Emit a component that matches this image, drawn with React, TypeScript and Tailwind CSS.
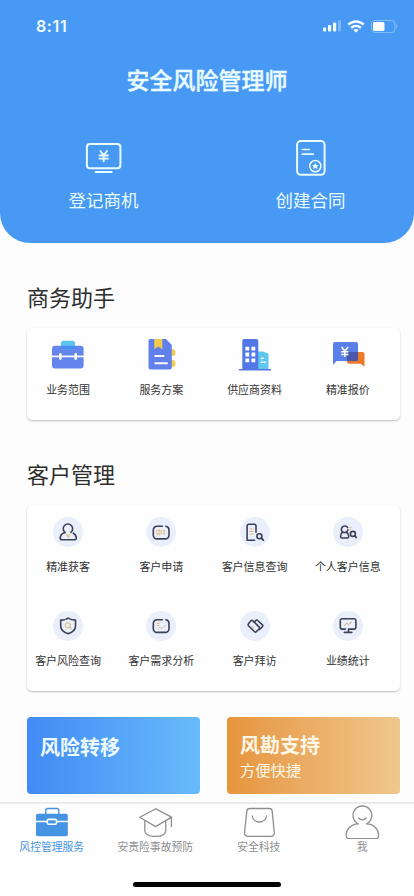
import type { ReactNode } from "react";
import { clsx } from "clsx";

interface Item {
  label: string;
  icon: ReactNode;
}

const NAVY = "#3d4157";
const GOLD = "#e3bc88";

function Art({ children }: { children: ReactNode }) {
  return (
    <svg width="40" height="40" viewBox="0 0 40 40" fill="none" className="block shrink-0">
      {children}
    </svg>
  );
}

function Round({ children }: { children: ReactNode }) {
  return (
    <span className="block h-[30px] w-[30px] shrink-0 rounded-full bg-[#e9effb]">
      <svg width="30" height="30" viewBox="0 0 30 30" fill="none" stroke={NAVY} strokeWidth="1.6" strokeLinecap="round" strokeLinejoin="round">
        {children}
      </svg>
    </span>
  );
}

const business: Item[] = [
  {
    label: "业务范围",
    icon: (
      <Art>
        <rect x="4" y="11.7" width="31.6" height="22.8" rx="3" fill="#6385ec" />
        <path d="M13 14.8V9a2.3 2.3 0 0 1 2.3-2.3h9.4A2.3 2.3 0 0 1 27 9v5.8a3 3 0 0 1-2 .7H15a3 3 0 0 1-2-.7Z" fill="#5cc4ee" />
        <path d="M13 11.7h14v3.1a3 3 0 0 1-2 .7H15a3 3 0 0 1-2-.7Z" fill="#4a8df0" />
        <path d="M4 22.4h32" stroke="#fff" strokeWidth="1.7" />
        <path d="M12.4 20.4v4.2M27.7 20.4v4.2" stroke="#fff" strokeWidth="2.6" strokeLinecap="round" />
      </Art>
    ),
  },
  {
    label: "服务方案",
    icon: (
      <Art>
        <rect x="25" y="15.2" width="9.4" height="6.8" rx="2.5" fill="#f0cb55" />
        <rect x="25" y="26" width="9.4" height="6.8" rx="2.5" fill="#f0cb55" />
        <path d="M9.5 5H25l5.8 6v22.5a2 2 0 0 1-2 2H9.5a2 2 0 0 1-2-2V7a2 2 0 0 1 2-2Z" fill="#6081eb" />
        <path d="M13.3 5h8v10.2l-4-2.8-4 2.8Z" fill="#f2ca4c" />
        <path d="M14.3 22h8.2M14.3 29.3H26" stroke="#fff" strokeWidth="2" strokeLinecap="round" />
      </Art>
    ),
  },
  {
    label: "供应商资料",
    icon: (
      <Art>
        <path d="M22 17.5h6l5.5 2.2V36H22Z" fill="#61c8ed" />
        <path d="M25.7 24.2h3.2M25.7 28.3h5.2" stroke="#e6f8ff" strokeWidth="1.6" />
        <path d="M9.3 5h12a2 2 0 0 1 2 2v29h-16V7a2 2 0 0 1 2-2Z" fill="#5278e8" />
        <path d="M4.5 35.7h31" stroke="#5578df" strokeWidth="1.6" strokeLinecap="round" />
        <path d="M12.3 12.7v21.5M18.4 12.7v21.5" stroke="#fff" strokeWidth="3.8" strokeDasharray="3.8 2.1 3.8 2.1 3.8 20" />
      </Art>
    ),
  },
  {
    label: "精准报价",
    icon: (
      <Art>
        <path d="M21 18h13.5a2 2 0 0 1 2 2v12.8l-4-3.1H21a2 2 0 0 1-2-2V20a2 2 0 0 1 2-2Z" fill="#ed792b" />
        <path d="M7 8h21a2 2 0 0 1 2 2v15a2 2 0 0 1-2 2H8.5L5 31V10a2 2 0 0 1 2-2Z" fill="#5b7fe9" />
        <path d="M21 18h9v7a2 2 0 0 1-2 2h-9v-7a2 2 0 0 1 2-2Z" fill="#4c57a9" />
        <path d="m13.5 13 3.3 4 3.3-4M13.2 17.7h7.2M13.2 20.5h7.2M16.8 17v6" stroke="#fff" strokeWidth="1.5" />
      </Art>
    ),
  },
];

const customers: Item[] = [
  {
    label: "精准获客",
    icon: (
      <Round>
        <path d="M12 15.4a4.7 4.7 0 1 1 6-.1M12 15.4c-2.9.9-4.7 3-4.8 5.5 0 1.2.6 1.9 1.7 1.9h12.7c1.2 0 1.8-.8 1.7-1.9-.2-2.2-1.2-3.8-3-4.7" />
        <path d="m13.4 16.6 1.9 2.2 1.9-2.2M13.7 19h3.2M15.3 18.8v2" stroke={GOLD} strokeWidth="1" />
      </Round>
    ),
  },
  {
    label: "客户申请",
    icon: (
      <Round>
        <path d="M16.4 9.2H11A3.7 3.7 0 0 0 7.3 13v5.3a3.7 3.7 0 0 0 3.7 3.6h8.3a3.7 3.7 0 0 0 3.7-3.6V13a3.7 3.7 0 0 0-3.1-3.7" />
        <path d="M11.2 13.4h4v3.4h-4ZM13.2 12.4v5.8M11.2 18l1-.8M16.8 14h2M17.2 16.6h1.4M18.1 13v4.6" stroke={GOLD} strokeWidth=".9" />
      </Round>
    ),
  },
  {
    label: "客户信息查询",
    icon: (
      <Round>
        <path d="M16 15.3V9a1.8 1.8 0 0 0-1.8-1.8H8.9A1.8 1.8 0 0 0 7.1 9v14.2h7.5" />
        <path d="M10 11.8h3M10 14.4h3M10 17h3" stroke={GOLD} strokeWidth="1.1" />
        <circle cx="19.4" cy="19.2" r="2.5" />
        <path d="m21.4 21.1 1.9 2" strokeWidth="1.8" />
      </Round>
    ),
  },
  {
    label: "个人客户信息",
    icon: (
      <Round>
        <path d="M9.6 15a3.4 3.4 0 1 1 5-4.5M9.6 15c-1.3.8-2 2.1-2 4.4 0 1 .5 1.6 1.4 1.6h5.3c1 0 1.5-.6 1.4-1.6-.1-2.1-.8-3.5-2.2-4.4M14.8 12.9c-.2 1-.7 1.7-1.3 2.1-1.2.7-2.6.7-3.9 0" />
        <path d="M16.3 10.8h2M16.3 13h1.2" stroke={GOLD} strokeWidth="1" />
        <circle cx="19.9" cy="16.9" r="2.5" />
        <path d="m21.9 18.9 1.3 1.6" strokeWidth="1.8" />
      </Round>
    ),
  },
  {
    label: "客户风险查询",
    icon: (
      <Round>
        <path d="m13 8.2 2.1-1.1c2.3 1.5 4.6 2 7.4 2v6.2c0 3.4-2.5 5.8-7.4 7.4-4.9-1.6-7.4-4-7.4-7.4V9.1c1.4 0 2.6-.1 3.7-.4" />
        <circle cx="14.8" cy="14.3" r="2.5" stroke={GOLD} strokeWidth="1.1" />
        <path d="m16.7 16.2 1.5 1.5" stroke={GOLD} strokeWidth="1.1" />
      </Round>
    ),
  },
  {
    label: "客户需求分析",
    icon: (
      <Round>
        <path d="M16.4 8.7H11a3.7 3.7 0 0 0-3.7 3.8v5.3a3.7 3.7 0 0 0 3.7 3.6h8.3a3.7 3.7 0 0 0 3.7-3.6v-5.3a3.7 3.7 0 0 0-3.1-3.7" />
        <path d="M11 12.3h2.6M11 14.5h2.2M12.3 17.5c2-3 2.5 1.4 4.2-.7 1-1.3 1.8-.2 3-2.2" stroke={GOLD} strokeWidth="1" />
      </Round>
    ),
  },
  {
    label: "客户拜访",
    icon: (
      <Round>
        <path d="m12.8 9.7 6.5 6.4a1.2 1.2 0 0 1 0 1.7l-3 3a1.2 1.2 0 0 1-1.7 0l-6.1-6.1a1.4 1.4 0 0 1 0-2l2.4-2.9a1.4 1.4 0 0 1 1.9-.1Z" />
        <path d="m14.3 11.1 1.5-1.6a1.3 1.3 0 0 1 1.9 0l4.7 4.4a1.3 1.3 0 0 1 0 1.8l-2.8 2.8" />
        <path d="m11.7 15.4 2.5 2.5" stroke={GOLD} strokeWidth=".9" />
      </Round>
    ),
  },
  {
    label: "业绩统计",
    icon: (
      <Round>
        <path d="M12.5 18.1H9.1a1.8 1.8 0 0 1-1.8-1.8V9.5a1.8 1.8 0 0 1 1.8-1.8h12a1.8 1.8 0 0 1 1.8 1.8v6.8a1.8 1.8 0 0 1-1.8 1.8h-5.6v2.8M11.3 21.4h7.5" />
        <path d="m11.6 14.4 2.1-2.2 1.7 1.5 3-2.5" stroke="#e0a068" strokeWidth="1" />
      </Round>
    ),
  },
];

const tabs: Item[] = [
  {
    label: "风控管理服务",
    icon: (
      <>
        <path d="M13.8 10V6.5a2 2 0 0 1 2-2h9a2 2 0 0 1 2 2V10" strokeWidth="1.4" />
        <rect x="4" y="9.8" width="31.8" height="22.4" rx="1.8" fill="currentColor" stroke="none" />
        <path d="M4 17.5h10.5M25.5 17.5H36" stroke="#fff" strokeWidth="1.3" />
        <rect x="15.3" y="15.4" width="9.2" height="4.8" rx="1.4" stroke="#fff" strokeWidth="1.6" />
      </>
    ),
  },
  {
    label: "安责险事故预防",
    icon: (
      <path d="M4.8 13.3 20.8 4.8l15.8 8.3-16 9.5ZM9.8 17v9.5c0 3.2 3.5 5.8 8 5.8h5.4c4.5 0 7.6-2.6 7.6-5.8V17M36.4 13.3v9.2" />
    ),
  },
  {
    label: "安全科技",
    icon: (
      <>
        <path d="M10.8 4.5h19.4a3 3 0 0 1 3 2.7l2.1 21.5a3.3 3.3 0 0 1-3.3 3.6H8.8a3.3 3.3 0 0 1-3.3-3.6L7.8 7.2a3 3 0 0 1 3-2.7Z" />
        <path d="M13.2 12c.6 3.5 3.6 6 7.2 6s6.6-2.5 7.2-6" />
      </>
    ),
  },
  {
    label: "我",
    icon: (
      <path d="M16.2 19.8a9.4 9.4 0 1 1 8.4 0M16.2 19.9C8.8 20.3 4.2 25.2 4.2 31.5c0 2.2 1 3.2 3.2 3.2h26c2.200 0 3.200-1 3.200-3.200 0-6.300-4.600-11.200-12-11.600M16.800 14c1.800 2.400 5.600 2.400 7.400 0" />
    ),
  },
];

function StatusBar() {
  return (
    <div className="flex h-[52px] items-center justify-between pl-9 pr-4">
      <span className="font-['Inter'] text-[16px] font-semibold tracking-[0.6px] text-[#eefbff]">8:11</span>
      <div className="flex items-center gap-1.5">
        <svg width="18" height="12" viewBox="0 0 18 12" fill="#f3fcff">
          <rect x="0" y="7.5" width="3.2" height="4" rx="1" />
          <rect x="5" y="5" width="3.2" height="6.5" rx="1" />
          <rect x="10" y="2.5" width="3.2" height="9" rx="1" />
          <rect x="15" y="0" width="3" height="11.5" rx="1" opacity=".3" />
        </svg>
        <svg width="18" height="13" viewBox="0 0 18 13" fill="none" stroke="#f3fcff" strokeWidth="2.4">
          <path d="M1.3 4.7c4.4-4.3 11-4.3 15.4 0M4.2 7.8c2.900-2.600 6.700-2.600 9.600 0" />
          <path d="M6.3 9.9c1.600-1.300 3.800-1.300 5.400 0L9 12.600Z" fill="#f3fcff" stroke="none" />
        </svg>
        <svg width="27" height="13" viewBox="0 0 27 13" fill="none">
          <rect x=".5" y=".5" width="23.5" height="12" rx="3.5" stroke="#83bff8" />
          <rect x="2" y="2" width="11.5" height="9" rx="1.8" fill="#fff" />
          <path d="M25.3 4.5c1.500.7 1.500 3.300 0 4Z" fill="#83bff8" />
        </svg>
      </div>
    </div>
  );
}

function Cell({ item, className }: { item: Item; className?: string }) {
  return (
    <div className={clsx("flex flex-col items-center", className)}>
      {item.icon}
      <span className="whitespace-nowrap text-[11px] leading-4 text-[#333]">{item.label}</span>
    </div>
  );
}

export default function App() {
  return (
    <div className="flex h-[896px] w-[414px] flex-col overflow-hidden bg-[#fdfdfd] font-['Noto_Sans_CJK_SC',sans-serif]">
      <header className="h-[243px] shrink-0 rounded-b-[30px] bg-[#4899f4] text-[#e8fbff]">
        <StatusBar />
        <h1 className="mt-[11px] text-center text-[23px] font-medium leading-8 [-webkit-text-stroke:0.4px_#e8fbff]">安全风险管理师</h1>
        <div className="mt-[43px] grid grid-cols-2">
          <button className="flex flex-col items-center gap-[9px]">
            <Art>
              <g stroke="currentColor" strokeWidth="2" strokeLinecap="round">
                <rect x="2.9" y="5.9" width="33.5" height="24.3" rx="3" />
                <path d="M11.5 34h16.2" />
                <path d="m16.3 13 3.4 4.2 3.4-4.2M15.4 17.5h8.6M15.4 20.6h8.6M19.7 17.2v6" strokeWidth="1.9" />
              </g>
            </Art>
            <span className="text-[17.5px] leading-[26px]">登记商机</span>
          </button>
          <button className="flex flex-col items-center gap-[9px]">
            <Art>
              <g stroke="currentColor" strokeWidth="2" strokeLinecap="round">
                <rect x="6.1" y="3.1" width="27.5" height="33.7" rx="3.5" />
                <path d="M11.3 11.5h7M11.3 16.2h11" strokeWidth="1.7" />
                <circle cx="24.3" cy="28.1" r="5.6" strokeWidth="1.6" />
                <path d="m24.3 24.700 1.100 2.200 2.300.3-1.700 1.600.4 2.300-2.100-1.100-2.100 1.100.4-2.300-1.700-1.600 2.300-.3Z" fill="currentColor" stroke="none" />
              </g>
            </Art>
            <span className="text-[17.5px] leading-[26px]">创建合同</span>
          </button>
        </div>
      </header>

      <main className="flex-1 pl-[27px] pr-[14px]">
        <h2 className="mt-[37px] text-[22px] leading-8 text-[#2e2e2e]">商务助手</h2>
        <section className="mt-4 h-[92px] rounded-[5px] bg-[#fefefe] pt-[6px] shadow-[0_1px_2px_rgba(0,0,0,0.25)]">
          <div className="-ml-[5.5px] mr-[5.5px] grid grid-cols-4">
            {business.map((item) => <Cell key={item.label} item={item} className="gap-[7px]" />)}
          </div>
        </section>

        <h2 className="mt-[37px] text-[22px] leading-8 text-[#2e2e2e]">客户管理</h2>
        <section className="mt-4 h-[186px] rounded-[5px] bg-[#fefefe] pt-[12px] shadow-[0_1px_2px_rgba(0,0,0,0.25)]">
          <div className="-ml-[5.5px] mr-[5.5px] grid grid-cols-4 gap-y-[37px]">
            {customers.map((item) => <Cell key={item.label} item={item} className="gap-[11px]" />)}
          </div>
        </section>

        <div className="mt-[26px] grid grid-cols-2 gap-[27px]">
          <div className="h-[77px] rounded-[4px] bg-gradient-to-r from-[#428af5] to-[#68bbfa] px-[13px] pt-4 text-[#effcff]">
            <p className="text-[20px] font-bold leading-7">风险转移</p>
          </div>
          <div className="h-[77px] rounded-[4px] bg-gradient-to-r from-[#e6953c] to-[#efc78c] px-[13px] pt-[14px] text-[#fff7e6]">
            <p className="text-[20px] font-bold leading-7">风勘支持</p>
            <p className="-mt-px text-[15.3px] leading-[22px]">方便快捷</p>
          </div>
        </div>
      </main>

      <nav className="flex h-[94px] shrink-0 flex-col items-center border-t-2 border-[#ebebeb] bg-[#fefefe]">
        <div className="grid w-full grid-cols-4">
          {tabs.map((tab, i) => (
            <button key={tab.label} className={clsx("flex flex-col items-center", i === 0 ? "text-[#4594e4]" : "text-[#8e8e8e]")}>
              <svg width="40" height="35" viewBox="0 0 40 35" fill="none" stroke="currentColor" strokeWidth="1.3" strokeLinecap="round" strokeLinejoin="round">
                {tab.icon}
              </svg>
              <span className="-mt-px whitespace-nowrap text-[10.8px] leading-4">{tab.label}</span>
            </button>
          ))}
        </div>
        <div className="mt-7 h-[5px] w-[148px] shrink-0 rounded-full bg-black" />
      </nav>
    </div>
  );
}
